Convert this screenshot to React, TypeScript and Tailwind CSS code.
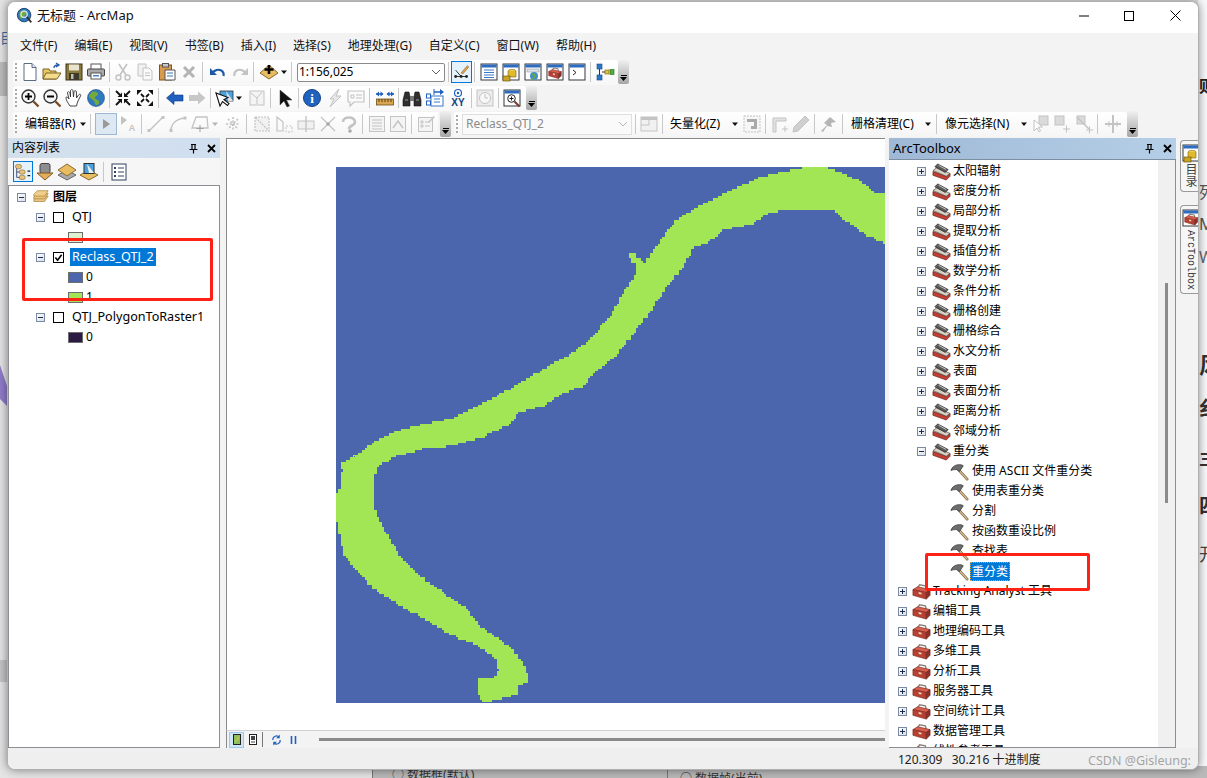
import type { ReactNode } from "react";

const riverPoints = [
  [353,457],[373,442],[384,436],[401,429],[430,423],[455,417],[484,402],[512,387],[541,370],[562,358],[587,342],[609,317],
  [626,288],[635,273],[637,265],[629,257],[629,253],[633,254],[644,263],[659,242],[675,220],[694,208],[726,192],[759,177],
  [794,169],[805,167],[823,167],[844,174],[866,185],[873,193],[885,193],[885,243],[869,236],[844,219],[834,211],[805,209],
  [771,212],[755,223],[723,231],[709,243],[694,247],[684,267],[668,286],[651,312],[637,330],[616,357],[594,373],[585,386],
  [562,394],[544,406],[519,413],[512,423],[484,437],[453,446],[423,449],[394,457],[388,461],[377,467],[374,483],[374,508],
  [380,523],[400,557],[420,577],[443,593],[467,610],[480,627],[507,645],[521,660],[527,675],[527,683],[519,686],[518,695],
  [493,701],[482,703],[477,687],[477,678],[493,677],[499,670],[495,657],[477,645],[453,635],[423,618],[397,603],[373,587],
  [355,568],[344,553],[340,537],[336,513],[336,495],[340,487],[342,470],[340,463],[355,455],
];

// raster look: walk the outline on a coarse grid so the edge comes out in steps
function stepped(points: number[][], cell: number) {
  const snap = (v: number) => Math.round(v / cell) * cell;
  let d = "";
  let lastX = 0;
  let lastY = 0;
  points.forEach((p, i) => {
    const next = points[(i + 1) % points.length];
    const n = Math.max(1, Math.ceil(Math.hypot(next[0] - p[0], next[1] - p[1]) / cell));
    for (let k = 0; k < n; k++) {
      const x = snap(p[0] - 336 + ((next[0] - p[0]) * k) / n);
      const y = snap(p[1] - 167 + ((next[1] - p[1]) * k) / n);
      if (!d) d = `M${x} ${y}`;
      else if (x !== lastX || y !== lastY) d += `H${x}V${y}`;
      lastX = x;
      lastY = y;
    }
  });
  return d + "Z";
}

const riverPath = stepped(riverPoints, 2.4);

function I({ children, size = 20 }: { children: ReactNode; size?: number }) {
  return (
    <svg viewBox="0 0 20 20" width={size} height={size} className="shrink-0">
      {children}
    </svg>
  );
}

function Tool({ children, className = "" }: { children: ReactNode; className?: string }) {
  return <div className={`flex h-[22px] w-[22px] shrink-0 items-center justify-center ${className}`}>{children}</div>;
}

function Sep({ className = "" }: { className?: string }) {
  return (
    <div className={`flex h-[20px] w-[5px] shrink-0 justify-center ${className}`}>
      <div className="h-full w-px bg-[#c8c8c8]" />
    </div>
  );
}

function Grip() {
  return (
    <div className="flex h-full w-[6px] shrink-0 flex-col items-center justify-center gap-[2px]">
      {[0, 1, 2, 3, 4].map((i) => (
        <div key={i} className="h-[2px] w-[2px] bg-[#a9a9a9]" />
      ))}
    </div>
  );
}

function Dd({ className = "", dim = false }: { className?: string; dim?: boolean }) {
  return (
    <svg viewBox="0 0 8 8" width={8} height={8} className={`shrink-0 ${className}`}>
      <path d="M1 2.5h6L4 6z" fill={dim ? "#b5b5b5" : "#111"} />
    </svg>
  );
}

function Overflow({ className = "" }: { className?: string }) {
  return (
    <div className={`flex w-[11px] shrink-0 flex-col items-center justify-end gap-px rounded-[2px] bg-gradient-to-b from-[#f0f0f0] to-[#a6a6a6] pb-[3px] ${className}`}>
      <div className="h-px w-[6px] bg-black" />
      <svg viewBox="0 0 7 4" width={7} height={4}>
        <path d="M0 0h7L3.5 4z" fill="#000" />
      </svg>
    </div>
  );
}

const win = (title: string, body: ReactNode) => (
  <I>
    <rect x="2" y="2" width="16" height="16" fill="#fff" stroke="#33363d" />
    <rect x="2.5" y="2.5" width="15" height="3" fill={title} />
    {body}
  </I>
);

const redBox = (
  <>
    <path d="M6 6l2-3 6 1 1 3" fill="none" stroke="#8c8078" strokeWidth="1.5" />
    <path d="M1 8l5-3 13 3-4 3z" fill="#d9604f" stroke="#7d2a22" strokeWidth=".7" />
    <path d="M1 8l14 3v7L1 14z" fill="#b93f33" stroke="#7d2a22" strokeWidth=".7" />
    <path d="M15 11l4-3v6l-4 4z" fill="#8f2f26" stroke="#6d2019" strokeWidth=".7" />
    <path d="M7 10.500l3 .7v2l-3-.7z" fill="#e7d7b0" />
  </>
);

const ToolboxIcon = () => <I size={19}>{redBox}</I>;

const ToolsetIcon = () => (
  <I size={19}>
    <path d="M1 10l14 5 4-3v3l-4 4-14-5z" fill="#bf3f33" stroke="#6d2019" strokeWidth=".7" />
    <path d="M1 9l4-3 14 6-4 3z" fill="#d6cfc2" stroke="#444" strokeWidth=".7" />
    <path d="M3 5l3-3 11 6-3 3z" fill="#5a5a5a" stroke="#1f1f1f" strokeWidth=".7" />
    <path d="M7 3.500l8 4.500" stroke="#c8c8c8" strokeWidth="1" />
  </I>
);

const HammerIcon = () => (
  <I size={19}>
    <path d="M8 7l10 11" stroke="#8a6f4a" strokeWidth="3" strokeLinecap="round" />
    <path d="M8 7l10 11" stroke="#d8c4a0" strokeWidth="1.2" strokeLinecap="round" />
    <path d="M1 9c1-4 5-7 11-6l2 1-4 6-3-2c-2 0-4 0-6 1z" fill="#6d6d6d" stroke="#2b2b2b" strokeWidth=".7" />
  </I>
);

function Box({ open }: { open?: boolean }) {
  return (
    <div className="relative h-[9px] w-[9px] shrink-0 border border-[#7b8aa3] bg-gradient-to-br from-white to-[#d9dde4]">
      <div className="absolute left-[1px] top-[3px] h-px w-[5px] bg-[#1d2c4f]" />
      {!open && <div className="absolute left-[3px] top-[1px] h-[5px] w-px bg-[#1d2c4f]" />}
    </div>
  );
}

function Check({ on }: { on?: boolean }) {
  return (
    <div className="flex h-[11px] w-[11px] shrink-0 items-center justify-center border border-black bg-white">
      {on && (
        <svg viewBox="0 0 10 10" width={9} height={9}>
          <path d="M1.5 5l2.5 3 4.5-6" fill="none" stroke="#000" strokeWidth="1.8" />
        </svg>
      )}
    </div>
  );
}

function Swatch({ color }: { color: string }) {
  return <div className="h-[11px] w-[15px] shrink-0 border border-[#6e6e6e]" style={{ backgroundColor: color }} />;
}

function LayerRow({ name, on, selected }: { name: string; on?: boolean; selected?: boolean }) {
  return (
    <div className="flex h-5 items-center pl-[27px]">
      <Box open />
      <div className="ml-[8px]">
        <Check on={on} />
      </div>
      <span className={`ml-[6px] px-[2px] text-[12.6px] leading-[18px] ${selected ? "bg-[#0078d7] text-white" : ""}`}>{name}</span>
    </div>
  );
}

function LegendRow({ color, label }: { color: string; label?: string }) {
  return (
    <div className="flex h-5 items-center pl-[59px]">
      <Swatch color={color} />
      <span className="ml-[3px]">{label}</span>
    </div>
  );
}

const toolsets = ["太阳辐射", "密度分析", "局部分析", "提取分析", "插值分析", "数学分析", "条件分析", "栅格创建", "栅格综合", "水文分析", "表面", "表面分析", "距离分析", "邻域分析"];
const tools = ["使用 ASCII 文件重分类", "使用表重分类", "分割", "按函数重设比例", "查找表"];
const boxes = ["Tracking Analyst 工具", "编辑工具", "地理编码工具", "多维工具", "分析工具", "服务器工具", "空间统计工具", "数据管理工具", "线性参考工具"];
const menus = ["文件(F)", "编辑(E)", "视图(V)", "书签(B)", "插入(I)", "选择(S)", "地理处理(G)", "自定义(C)", "窗口(W)", "帮助(H)"];

function ToolsetRow({ name, open }: { name: string; open?: boolean }) {
  return (
    <div className="flex h-5 items-center pl-[28px]">
      <Box open={open} />
      <div className="ml-[6px] w-[19px]">
        <ToolsetIcon />
      </div>
      <span className="ml-[2px] whitespace-pre">{name}</span>
    </div>
  );
}

function ToolRow({ name, selected }: { name: string; selected?: boolean }) {
  return (
    <div className="flex h-5 items-center pl-[61px]">
      <HammerIcon />
      {selected ? (
        <span className="ml-[1px] border border-dotted border-[#e0a040] bg-[#0078d7] px-px leading-[17px] text-white">{name}</span>
      ) : (
        <span className="ml-[3px] whitespace-pre">{name}</span>
      )}
    </div>
  );
}

function BoxRow({ name }: { name: string }) {
  return (
    <div className="flex h-5 items-center pl-[9px]">
      <Box />
      <div className="ml-[5px] w-[19px]">
        <ToolboxIcon />
      </div>
      <span className="ml-[2px] whitespace-pre">{name}</span>
    </div>
  );
}

const dim = "#c3c3c3";

function RowOne() {
  return (
    <div className="ml-[5px] flex h-[25px] w-[605px] items-center rounded-[3px] bg-gradient-to-b from-white to-[#f7f7f7]">
      <Grip />
      <Tool><I><path d="M4 1.5h8l4 4v13H4z" fill="#fff" stroke="#5b6b80" /><path d="M12 1.5v4h4" fill="#dfe7f1" stroke="#5b6b80" /></I></Tool>
      <Tool><I><path d="M1 17V7h6l1 2h6v8z" fill="#e8c765" stroke="#7a6226" /><path d="M1 17l3-6h15l-4 6z" fill="#f4dc8d" stroke="#7a6226" /><path d="M12 6c0-2 2-3 4-3M14 1l3 2-3 2" fill="none" stroke="#2a5fb0" strokeWidth="1.4" /></I></Tool>
      <Tool><I><rect x="2" y="2" width="16" height="16" fill="#8a7a3c" stroke="#3b3418" /><rect x="5" y="2.5" width="10" height="6" fill="#e9e4cf" /><rect x="5" y="11" width="10" height="7" fill="#3d3a2a" /><rect x="7" y="12" width="2.5" height="5" fill="#bbb" /></I></Tool>
      <Tool><I><rect x="5" y="2" width="10" height="6" fill="#fff" stroke="#555" /><rect x="1.5" y="7" width="17" height="7" rx="1" fill="#a9a9a9" stroke="#444" /><rect x="5" y="11" width="10" height="6" fill="#fff" stroke="#555" /><rect x="7" y="13" width="6" height="1.5" fill="#4a86c8" /></I></Tool>
      <Sep />
      <Tool><I><path d="M6 2l7 11M14 2L7 13" stroke={dim} strokeWidth="1.6" /><circle cx="5.5" cy="15.5" r="2.5" fill="none" stroke={dim} strokeWidth="1.4" /><circle cx="14.5" cy="15.5" r="2.5" fill="none" stroke={dim} strokeWidth="1.4" /></I></Tool>
      <Tool><I><path d="M3 2h8v12H3z" fill="#f1f1f1" stroke={dim} /><path d="M8 6h6l3 3v9H8z" fill="#fafafa" stroke={dim} /><path d="M10 11h5M10 13.5h5" stroke={dim} /></I></Tool>
      <Tool><I><rect x="2.5" y="3" width="12" height="15" fill="#d99a4e" stroke="#7d5520" /><rect x="5.5" y="1.5" width="6" height="3.5" fill="#c9c9c9" stroke="#555" /><path d="M8 8h10v10H8z" fill="#fff" stroke="#555" /><path d="M10 11h6M10 14h6" stroke="#3b74b5" strokeWidth="1.2" /></I></Tool>
      <Tool><I><path d="M5 5l10 10M15 5L5 15" stroke="#b4b4b4" strokeWidth="3" /></I></Tool>
      <Sep />
      <Tool className="ml-[2px]"><I><path d="M15.5 14c1-5-4-8-9-5L4 11" fill="none" stroke="#1f5aa8" strokeWidth="2.2" /><path d="M2 6v7h7z" fill="#1f5aa8" /></I></Tool>
      <Tool><I><path d="M4.5 14c-1-5 4-8 9-5l2.5 2" fill="none" stroke={dim} strokeWidth="2.2" /><path d="M18 6v7h-7z" fill={dim} /></I></Tool>
      <Sep />
      <Tool className="ml-[2px]"><I><path d="M10 3l9 8-9 6-9-6z" fill="#e8bd62" stroke="#8a6a2a" /><path d="M10 3v9M5.5 7.5h9" stroke="#000" strokeWidth="2.6" /></I></Tool>
      <Dd />
      <Sep className="ml-px" />
      <div className="ml-[3px] flex h-[19px] w-[148px] shrink-0 items-center justify-between rounded-[2px] border border-[#8a8a8a] bg-white pl-px pr-[3px]">
        <span>1:156,025</span>
        <svg viewBox="0 0 10 6" width={10} height={6}><path d="M1 1l4 4 4-4" fill="none" stroke="#666" /></svg>
      </div>
      <Sep className="ml-px" />
      <div className="flex h-[22px] w-[21px] shrink-0 items-center justify-center border border-[#0078d7] bg-[#e5f1fb]">
        <I size={18}><path d="M2 15h13" stroke="#222" /><circle cx="3" cy="15" r="1.6" fill="#222" /><circle cx="9" cy="15" r="1.6" fill="#222" /><circle cx="15" cy="15" r="1.6" fill="#222" /><path d="M3 8l6 7" stroke="#222" /><path d="M9 11L16 3l1.5 1.5L11 12z" fill="#e8a33c" stroke="#7a4f14" strokeWidth=".6" /></I>
      </div>
      <Sep />
      <Tool className="ml-px">{win("#2d6cc0", <path d="M5 8h10M5 10.5h10M5 13h10M5 15.5h10" stroke="#3a78c8" />)}</Tool>
      <Tool>{win("#2d6cc0", <><ellipse cx="11" cy="9" rx="4" ry="1.6" fill="#f2d24c" stroke="#7a6210" strokeWidth=".6" /><path d="M7 9v6h8V9" fill="#e2b92c" stroke="#7a6210" strokeWidth=".6" /><rect x="2" y="14" width="7" height="5" fill="#c9a321" stroke="#5e4c0c" strokeWidth=".6" /></>)}</Tool>
      <Tool>{win("#2d6cc0", <><rect x="4" y="7" width="12" height="3" fill="#dde3ea" stroke="#888" strokeWidth=".5" /><circle cx="11" cy="14" r="4" fill="#3f8fd0" /><path d="M9 12.5c2-.8 3 .4 3 1.5s-2 2-2.5 3.5" stroke="#6aa93b" strokeWidth="1.6" fill="none" /></>)}</Tool>
      <Tool>{win("#2d6cc0", <g transform="translate(3 4) scale(.7)">{redBox}</g>)}</Tool>
      <Tool>{win("#2d6cc0", <path d="M6 8l3 2.5-3 2.5" fill="none" stroke="#222" />)}</Tool>
      <Sep />
      <Tool className="ml-px"><I><rect x="2" y="2" width="5" height="5" fill="#2e78c8" stroke="#174a85" strokeWidth=".6" /><rect x="2" y="13" width="5" height="5" fill="#2e78c8" stroke="#174a85" strokeWidth=".6" /><rect x="10" y="8" width="4" height="4" fill="#e3c23a" stroke="#7a6210" strokeWidth=".6" /><rect x="15" y="7.5" width="4" height="5" fill="#4fae3f" stroke="#236b19" strokeWidth=".6" /><path d="M4.5 7v6M7 10h3" stroke="#333" /></I></Tool>
    </div>
  );
}

function RowTwo() {
  return (
    <div className="ml-[5px] flex h-[25px] w-[513px] items-center rounded-[3px] bg-gradient-to-b from-white to-[#f7f7f7]">
      <Grip />
      <Tool><I><circle cx="8.5" cy="8.5" r="6.5" fill="#f4f4f4" stroke="#333" strokeWidth="1.4" /><path d="M5 8.5h7M8.5 5v7" stroke="#000" strokeWidth="1.8" /><path d="M13.5 13.5l5 5" stroke="#7a4a2a" strokeWidth="2.4" /></I></Tool>
      <Tool><I><circle cx="8.5" cy="8.5" r="6.5" fill="#f4f4f4" stroke="#333" strokeWidth="1.4" /><path d="M5 8.5h7" stroke="#000" strokeWidth="1.8" /><path d="M13.5 13.5l5 5" stroke="#7a4a2a" strokeWidth="2.4" /></I></Tool>
      <Tool><I><path d="M6 18c-2-3-4-6-4-8s2-1 3 1L3.5 5c0-2 2-1.5 2.5 0L6.5 9 6.500 3c0-2 2.500-2 2.500 0l.5 6 .5-5c.3-2 2.500-1.500 2.400 0L12.500 10l2-3c1-1.500 3-.5 2 1l-3 6-1 4z" fill="#fff" stroke="#333" strokeWidth=".9" /></I></Tool>
      <Tool><I><circle cx="10" cy="10" r="8.5" fill="#2f79bf" stroke="#1b4a7c" strokeWidth=".6" /><path d="M6 4c3-1 6 0 6 2s-3 2-3 4 4 1 4 4-2 3-3 3c-2-2-1-4-3-5S3 9 3 8s2-3 3-4z" fill="#74a93d" /></I></Tool>
      <Sep />
      <Tool><I><path d="M3 3l4 4M17 3l-4 4M3 17l4-4M17 17l-4-4" stroke="#111" strokeWidth="1.8" /><path d="M9 9V4.500L4.500 9zM11 9V4.500L15.500 9zM9 11v4.500L4.500 11zM11 11v4.500l4.500-4.500z" fill="#111" /></I></Tool>
      <Tool><I><path d="M6 6L9 9M14 6l-3 3M6 14l3-3M14 14l-3-3" stroke="#111" strokeWidth="1.8" /><path d="M2 2h5L2 7zM18 2h-5l5 5zM2 18h5l-5-5zM18 18h-5l5-5z" fill="#111" /></I></Tool>
      <Sep />
      <Tool className="ml-[3px]"><I><path d="M1.5 10L9 3.500V7h9v6H9v3.500z" fill="#1f5fbf" stroke="#0d3a80" strokeWidth=".6" /></I></Tool>
      <Tool><I><path d="M18.5 10L11 3.500V7H2v6h9v3.500z" fill="#c7c7c7" /></I></Tool>
      <Sep />
      <Tool><I><rect x="6" y="3" width="13" height="10" fill="#4aa3df" stroke="#333" strokeWidth=".8" /><path d="M12 3l7 10h-5z" fill="#e2e2e2" /><path d="M2 5l4 13 2.500-4.500 5 4 1.500-2-5-4 4-2z" fill="#fff" stroke="#111" strokeWidth="1.1" /></I></Tool>
      <Dd />
      <Tool className="ml-[3px]"><I><rect x="3" y="3" width="14" height="14" fill="#f4f4f4" stroke={dim} /><path d="M4 5l6 5 5-6M10 10v6" fill="none" stroke={dim} /></I></Tool>
      <Sep />
      <Tool className="ml-px"><I><path d="M5 2v15l4-4 3 6 2.500-1-3-6h5.500z" fill="#111" stroke="#444" strokeWidth=".5" /></I></Tool>
      <Sep />
      <Tool><I><circle cx="10" cy="10" r="8.5" fill="#1f63bf" stroke="#123f80" /><text x="10" y="15" textAnchor="middle" fontSize="13" fontWeight="700" fontFamily="Liberation Serif, serif" fill="#fff">i</text></I></Tool>
      <Tool className="ml-px"><I><path d="M14 1L5 11h4l-4 8 11-11h-5z" fill="#e7e7e7" stroke={dim} /></I></Tool>
      <Tool className="-ml-px"><I><path d="M2 3h16v11H8l-4 4v-4H2z" fill="#fafafa" stroke={dim} strokeWidth="1.2" /><path d="M5 7h3v3H5zM10 7h6M10 10h6" fill="none" stroke={dim} /></I></Tool>
      <Sep />
      <Tool className="ml-[2px]"><I><rect x="1.5" y="11" width="17" height="6" fill="#d9a54f" stroke="#6d4f1c" strokeWidth=".8" /><path d="M4 11v3M7 11v3M10 11v3M13 11v3M16 11v3" stroke="#5a3f12" /><path d="M1 6h7M12 6h7" stroke="#1f5fbf" strokeWidth="1.4" /><path d="M1 6l3-2.500v5zM19 6l-3-2.500v5zM8.500 6l-3-2.500v5zM11.500 6l3-2.500v5z" fill="#1f5fbf" /></I></Tool>
      <Sep />
      <Tool><I><path d="M3 4h4l1 5v9H1v-6zM17 4h-4l-1 5v9h7v-6z" fill="#2f2f2f" stroke="#111" strokeWidth=".6" /><rect x="8" y="8" width="4" height="5" fill="#777" /><path d="M3 12h3M14 12h3" stroke="#999" /></I></Tool>
      <Tool className="ml-px"><I><rect x="6" y="8" width="12" height="10" fill="#fff" stroke="#3a78c8" /><path d="M9 11h6M9 14h6" stroke="#3a78c8" /><rect x="1.5" y="6" width="4" height="4" fill="#fff" stroke="#1f5fbf" /><rect x="1.5" y="13" width="4" height="4" fill="#fff" stroke="#1f5fbf" /><path d="M9 4h6" stroke="#1f5fbf" strokeWidth="1.4" /><path d="M19 4l-4-3v6z" fill="#1f5fbf" /><path d="M9 1v6" stroke="#1f5fbf" /></I></Tool>
      <Tool className="ml-px"><I><circle cx="10" cy="5" r="3.5" fill="none" stroke="#1f5fbf" strokeWidth="1.2" /><circle cx="10" cy="5" r="1.2" fill="#1f5fbf" /><text x="10" y="18" textAnchor="middle" fontSize="10" fontWeight="700" fontFamily="Liberation Sans, sans-serif" fill="#14427f">XY</text></I></Tool>
      <Sep />
      <Tool><I><rect x="2" y="2" width="16" height="16" fill="#ececec" stroke={dim} /><circle cx="10" cy="10" r="5.5" fill="#f8f8f8" stroke={dim} /><path d="M10 6v4h3" fill="none" stroke={dim} /></I></Tool>
      <Sep />
      <Tool>{win("#2d6cc0", <><circle cx="9.5" cy="10.500" r="3.800" fill="#fff" stroke="#222" /><path d="M7.500 10.500h4M9.500 8.500v4" stroke="#222" /><path d="M12.500 13.500l5 5" stroke="#7a3b2a" strokeWidth="2" /></>)}</Tool>
    </div>
  );
}

function RowThree() {
  return (
    <div className="ml-[5px] flex h-[25px] items-center">
      <div className="flex h-full w-[425px] items-center rounded-l-[3px] bg-gradient-to-b from-white to-[#f5f5f5]">
        <Grip />
        <span className="ml-[6px] w-[52px] shrink-0 whitespace-nowrap">编辑器(R)</span>
        <Dd className="ml-[2px]" />
        <Sep className="ml-px" />
        <div className="ml-[2px] flex h-[22px] w-[22px] shrink-0 items-center justify-center border border-[#9db8d2] bg-[#dde8f3]">
          <svg viewBox="0 0 12 12" width={12} height={12}><path d="M3 1v10l7-5z" fill="#9a9a9a" /></svg>
        </div>
        <Tool><I><path d="M3 2v9l6-5z" fill={dim} /><text x="14" y="17" textAnchor="middle" fontSize="9" fontWeight="700" fontFamily="Liberation Sans, sans-serif" fill={dim}>A</text></I></Tool>
        <Sep />
        <Tool className="ml-px"><I><path d="M3 17L17 3" stroke={dim} strokeWidth="1.5" /><rect x="1.5" y="15" width="3" height="3" fill={dim} /><rect x="15.5" y="2" width="3" height="3" fill={dim} /></I></Tool>
        <Tool><I><path d="M3 17c0-7 5-12 14-13" fill="none" stroke={dim} strokeWidth="1.5" /><rect x="1.5" y="15" width="3" height="3" fill={dim} /><rect x="15.5" y="2.5" width="3" height="3" fill={dim} /></I></Tool>
        <Tool><I><path d="M2 14L6 3h11l1 11z" fill="none" stroke={dim} strokeWidth="1.3" /><path d="M10 11v7M6.500 14.500h7" stroke="#9f9f9f" /></I></Tool>
        <Dd dim />
        <Tool className="ml-[3px]"><I><path d="M3 10h14M10 3v14M5 5l10 10M15 5L5 15" stroke={dim} strokeWidth="1.6" strokeDasharray="2 1.5" /></I></Tool>
        <Sep />
        <Tool className="ml-[2px]"><I><path d="M3 3h14v14zM3 3v14h14" fill="#f1f1f1" stroke={dim} strokeWidth="1.2" strokeDasharray="2 1" /></I></Tool>
        <Tool><I><path d="M3 3l6 5v9H3z" fill="none" stroke={dim} strokeWidth="1.2" /><path d="M12 12h6v6h-6z" fill="none" stroke={dim} strokeDasharray="2 1.5" /></I></Tool>
        <Tool><I><rect x="2" y="7" width="16" height="8" fill="#f1f1f1" stroke={dim} /><path d="M10 2v16" stroke={dim} strokeWidth="1.4" /></I></Tool>
        <Tool><I><path d="M3 17L17 3M3 3l14 14" stroke={dim} strokeWidth="1.3" /><circle cx="10" cy="10" r="1.8" fill="#a9a9a9" /></I></Tool>
        <Tool className="-ml-px"><I><path d="M4 8c0-6 12-6 12 0 0 4-6 3-6 7" fill="none" stroke={dim} strokeWidth="2.6" /><circle cx="11" cy="17" r="1.8" fill="#a9a9a9" /></I></Tool>
        <Sep />
        <Tool className="ml-px"><I><rect x="2.5" y="2.5" width="15" height="15" fill="#f4f4f4" stroke={dim} /><path d="M5 6h10M5 9h10M5 12h10M5 15h10" stroke={dim} /></I></Tool>
        <Tool className="-ml-px"><I><rect x="2.5" y="2.5" width="15" height="15" fill="#f4f4f4" stroke={dim} /><path d="M5 14l5-7 5 7" fill="none" stroke={dim} strokeWidth="1.4" /></I></Tool>
        <Sep />
        <Tool className="ml-px"><I><rect x="2.5" y="3.5" width="14" height="14" fill="#f4f4f4" stroke={dim} /><path d="M5 7h2v2H5zM5 11h2v2H5zM9 8h5M9 12h5" fill="none" stroke={dim} /><path d="M12 8l6-6 1 1-6 6z" fill={dim} /></I></Tool>
      </div>
      <Overflow className="ml-[2px] h-[26px]" />
      <div className="ml-[3px] flex h-full w-[673px] items-center rounded-[3px] bg-gradient-to-b from-white to-[#f5f5f5]">
        <Grip />
        <div className="ml-[2px] flex h-[21px] w-[170px] shrink-0 items-center justify-between border border-[#dedede] bg-[#fafafa] pl-[3px] pr-[3px] text-[#8b8b8b]">
          <span>Reclass_QTJ_2</span>
          <svg viewBox="0 0 10 6" width={10} height={6}><path d="M1 1l4 4 4-4" fill="none" stroke="#b5b5b5" /></svg>
        </div>
        <Sep className="ml-px" />
        <Tool><I><rect x="2" y="3" width="16" height="14" fill="#f1f1f1" stroke={dim} /><rect x="2" y="3" width="16" height="3" fill={dim} /><path d="M10 6v5H2" fill="none" stroke={dim} /></I></Tool>
        <Sep />
        <span className="ml-[5px] w-[52px] shrink-0 whitespace-nowrap">矢量化(Z)</span>
        <Dd className="ml-[9px]" />
        <Tool className="ml-[2px]"><I><rect x="2" y="2" width="16" height="16" fill="#f6f6f6" stroke={dim} strokeDasharray="2 1" /><path d="M5 5h10v10H9v-3h3V8H5z" fill="#a9a9a9" /></I></Tool>
        <Sep />
        <Tool><I><path d="M4 18V4h13v3H7v11z" fill="#e2e2e2" stroke={dim} /><path d="M13 15h6M16 12v6" stroke={dim} /></I></Tool>
        <Tool><I><path d="M2 18l1-5L14 2l4 4L7 17z" fill="#cfcfcf" stroke={dim} /></I></Tool>
        <Sep />
        <Tool className="ml-px"><I><path d="M2 17l6-6-3-2 6-6 6 5-5 1 1 4-5-1-4 6z" fill="#b5b5b5" /></I></Tool>
        <Sep />
        <span className="ml-[6px] w-[64px] shrink-0 whitespace-nowrap">栅格清理(C)</span>
        <Dd className="ml-[9px]" />
        <Sep className="ml-[2px]" />
        <span className="ml-[6px] w-[66px] shrink-0 whitespace-nowrap">像元选择(N)</span>
        <Dd className="ml-[9px]" />
        <Tool className="ml-[2px]"><I><rect x="8" y="2" width="9" height="9" fill="#dadada" stroke={dim} /><path d="M3 6v11l3-3 2 4 1.5-1-2-4h4z" fill="#fff" stroke={dim} /></I></Tool>
        <Tool className="-ml-px"><I><rect x="3" y="2" width="9" height="9" fill="#dadada" stroke={dim} /><path d="M11 15h7M14.500 11.500v7" stroke={dim} /></I></Tool>
        <Tool><I><rect x="3" y="2" width="8" height="8" fill="#dadada" stroke={dim} /><path d="M3 3l12 12" stroke={dim} strokeWidth="1.5" /><path d="M12 16h7M15.500 12.500v7" stroke={dim} /></I></Tool>
        <Sep />
        <Tool className="ml-[2px]"><I><path d="M10 1v18" stroke="#b5b5b5" strokeWidth="1.6" /><path d="M2 10h16" stroke={dim} strokeWidth="2" /><path d="M6 7v6M14 7v6" stroke={dim} /></I></Tool>
      </div>
      <Overflow className="h-[26px]" />
    </div>
  );
}

function PanelButtons() {
  return (
    <div className="flex items-center gap-[7px]">
      <svg viewBox="0 0 11 11" width={11} height={11}><path d="M3 1.5h5M4 1.5v5h3v-5M1.5 6.500h8M5.500 6.500v4" fill="none" stroke="#000" strokeWidth="1.2" /></svg>
      <svg viewBox="0 0 11 11" width={11} height={11}><path d="M2 2l7 7M9 2L2 9" stroke="#000" strokeWidth="1.8" /></svg>
    </div>
  );
}

function Toc() {
  return (
    <div className="flex h-full w-[212px] shrink-0 flex-col">
      <div className="flex h-[20px] items-center justify-between bg-gradient-to-r from-[#d3e0ec] to-[#d0dff0] pl-[4px] pr-[3px] text-[12px]">
        <span>内容列表</span>
        <PanelButtons />
      </div>
      <div className="flex h-[27px] items-center bg-[#f6f6f6] pl-[5px]">
        <div className="flex h-[21px] w-[20px] items-center justify-center border border-[#0078d7] bg-[#e5f1fb]">
          <I size={18}><ellipse cx="5" cy="4" rx="3.5" ry="2.5" fill="#e8c27a" stroke="#7a6230" strokeWidth=".6" /><ellipse cx="9" cy="10" rx="3.5" ry="2.5" fill="#e8c27a" stroke="#7a6230" strokeWidth=".6" /><ellipse cx="9" cy="16" rx="3.5" ry="2.5" fill="#e8c27a" stroke="#7a6230" strokeWidth=".6" /><path d="M3 6v10h3M3 10h3" fill="none" stroke="#446" /><path d="M15 9h3M15 14h3" stroke="#123" strokeWidth="1.5" /></I>
        </div>
        <Tool className="ml-px"><I><rect x="5" y="1.5" width="10" height="10" rx="2" fill="#8e8e8e" stroke="#444" /><path d="M2 11h16l-8 7z" fill="#e2ad5d" stroke="#7d5a20" /></I></Tool>
        <Tool><I><path d="M10 8l9 5-9 5-9-5z" fill="#aaa" stroke="#666" /><path d="M10 2l9 6-9 6-9-6z" fill="#e8bd62" stroke="#8a6a2a" /></I></Tool>
        <Tool><I><path d="M10 8l9 5-9 5-9-5z" fill="#e8bd62" stroke="#8a6a2a" /><rect x="5" y="1.5" width="10" height="10" fill="#4aa3df" stroke="#333" /><path d="M8 2l7 9h-5z" fill="#eee" /></I></Tool>
        <Sep className="ml-px" />
        <Tool className="ml-[2px]"><I><rect x="3" y="2" width="14" height="16" fill="#fff" stroke="#33415c" /><path d="M5 5h2v2H5zM5 9h2v2H5zM5 13h2v2H5z" fill="#33415c" /><path d="M9 6h6M9 10h6M9 14h6" stroke="#33415c" /></I></Tool>
      </div>
      <div className="flex-1 border border-[#8d8d94] bg-white pt-[1px] text-[12px] text-black">
        <div className="flex h-5 items-center pl-[8px]">
          <Box open />
          <div className="ml-[6px]">
            <I size={18}><path d="M2 13l4-4h12l-4 6H2z" fill="#e7c68a" stroke="#a0762a" strokeWidth=".7" /><path d="M2 10l4-4h12l-4 6H2z" fill="#ecc67c" stroke="#a0762a" strokeWidth=".7" /><path d="M2 7l4-4h12l-4 6H2z" fill="#f0cf8c" stroke="#a0762a" strokeWidth=".7" /></I>
          </div>
          <span className="ml-[3px] font-bold">图层</span>
        </div>
        <LayerRow name="QTJ" />
        <LegendRow color="#dcf2cc" />
        <LayerRow name="Reclass_QTJ_2" on selected />
        <LegendRow color="#4c66ae" label="0" />
        <LegendRow color="#a2e655" label="1" />
        <LayerRow name="QTJ_PolygonToRaster1" />
        <LegendRow color="#2b1a44" label="0" />
      </div>
    </div>
  );
}

function MapView() {
  return (
    <div className="flex h-full w-[659px] shrink-0 flex-col border-t border-t-[#8a8a8a]">
      <div className="h-[592px] border-b border-l border-[#d0d0d0] border-l-[#8a8a8a] bg-white pl-[109px] pt-[28px]">
        <div className="h-[536px] w-[549px] bg-[#4c66ae]">
          <svg viewBox="0 0 549 536" width={549} height={536} shapeRendering="crispEdges">
            <path d={riverPath} fill="#a2e655" />
          </svg>
        </div>
      </div>
      <div className="flex h-[17px] items-center border-l border-[#8a8a8a] pl-[2px]">
        <div className="flex h-[16px] w-[15px] items-center justify-center border border-[#9cc8ee] bg-[#cfe5f8]">
          <svg viewBox="0 0 8 11" width={8} height={11}><rect x=".5" y=".5" width="7" height="10" fill="#8fbf5a" stroke="#222" /><path d="M2 8l4-5" stroke="#e8c63c" /></svg>
        </div>
        <div className="ml-[5px] flex w-[8px] justify-center">
          <svg viewBox="0 0 8 11" width={8} height={11}><rect x=".5" y=".5" width="7" height="10" fill="#fff" stroke="#222" /><rect x="2" y="2" width="4" height="4" fill="#444" /><path d="M2 8h4" stroke="#444" /></svg>
        </div>
        <div className="ml-[5px] h-[15px] w-px bg-[#777]" />
        <svg viewBox="0 0 12 12" width={11} height={12} className="ml-[8px]"><path d="M2 6a4 4 0 0 1 7-3M10 6a4 4 0 0 1-7 3" fill="none" stroke="#1f63bf" strokeWidth="1.3" /><path d="M9.5 0v4h-4zM2.5 12V8h4z" fill="#1f63bf" /></svg>
        <svg viewBox="0 0 8 10" width={8} height={10} className="ml-[8px]"><path d="M1.5 1v8M5.5 1v8" stroke="#1f5fbf" strokeWidth="1.6" /></svg>
        <div className="ml-[21px] h-[3px] flex-1 bg-[#8a8a8a]" />
      </div>
    </div>
  );
}

function Toolbox() {
  return (
    <div className="flex h-full w-[287px] shrink-0 flex-col">
      <div className="flex h-[22px] shrink-0 items-center justify-between border-b border-b-[#7e8ea1] bg-gradient-to-r from-[#9fb8d5] to-[#b6cfe8] pl-[4px] pr-[3px] text-[13px]">
        <span>ArcToolbox</span>
        <PanelButtons />
      </div>
      <div className="flex min-h-0 flex-1 overflow-hidden border-b border-r border-[#8d8d94] bg-white text-[12px] text-black">
        <div className="min-w-0 flex-1 overflow-hidden pt-px">
          {toolsets.map((name) => (
            <ToolsetRow key={name} name={name} />
          ))}
          <ToolsetRow name="重分类" open />
          {tools.map((name) => (
            <ToolRow key={name} name={name} />
          ))}
          <ToolRow name="重分类" selected />
          {boxes.map((name) => (
            <BoxRow key={name} name={name} />
          ))}
        </div>
        <div className="w-[17px] shrink-0 bg-[#f0f0f0] pl-[7px] pt-[123px]">
          <div className="h-[220px] w-[3px] bg-[#8a8a8a]" />
        </div>
      </div>
    </div>
  );
}

function SideTabs() {
  return (
    <div className="flex h-full w-[24px] shrink-0 flex-col pl-[4px] pt-[2px]">
      <div className="flex h-[52px] flex-col items-center rounded-l-[4px] border border-r-0 border-[#9a9a9a] bg-[#f6f6f6] pt-[2px]">
        {win("#2d6cc0", <><ellipse cx="11" cy="9" rx="4" ry="1.6" fill="#f2d24c" stroke="#7a6210" strokeWidth=".6" /><path d="M7 9v6h8V9" fill="#e2b92c" stroke="#7a6210" strokeWidth=".6" /><rect x="3" y="14" width="7" height="5" fill="#c9a321" stroke="#5e4c0c" strokeWidth=".6" /></>)}
        <span className="text-[12px] leading-[13px] text-[#444] [writing-mode:vertical-rl]">目录</span>
      </div>
      <div className="mt-[13px] flex h-[89px] flex-col items-center rounded-l-[4px] border border-r-0 border-[#9a9a9a] bg-[#f6f6f6] pt-[2px]">
        {win("#2d6cc0", <g transform="translate(3 4) scale(.72)">{redBox}</g>)}
        <span className="mt-[2px] font-['Liberation_Mono',monospace] text-[10px] leading-[13px] text-[#333] [writing-mode:vertical-rl]">ArcToolbox</span>
      </div>
    </div>
  );
}

export default function App() {
  return (
    <div className="relative h-[778px] w-[1207px] overflow-hidden bg-[#e4e4e4] font-['Noto_Sans','Noto_Sans_CJK_SC',sans-serif] text-[12px] text-black">
      {/* what shows around the window: the blog page behind it */}
      <div className="absolute left-0 top-[62px] h-[34px] w-[8px] bg-[#bdbdbd]" />
      <div className="absolute left-0 top-[30px] text-[14px] leading-[16px] text-[#3a6ea5]">目</div>
      <div className="absolute left-0 top-[660px] h-[22px] w-[8px] bg-[#c4c4c4]" />
      <svg viewBox="0 0 8 60" width={8} height={60} className="absolute left-0 top-[365px]"><path d="M0 0l8 24v18L0 34z" fill="#8f7cc9" /></svg>
      <div className="absolute right-0 top-0 h-full w-[9px] bg-[#f8f9fb]" />
      <div className="absolute bottom-0 left-[372px] h-[12px] w-[835px] bg-[#b9b9b9]" />
      <div className="absolute bottom-0 left-[372px] h-[12px] w-px bg-[#777]" />
      <div className="absolute bottom-0 left-[667px] h-[12px] w-px bg-[#777]" />
      <div className="absolute left-[392px] top-[766px] text-[12px] text-[#333]">○ 数据框(默认)</div>
      <div className="absolute left-[680px] top-[770px] text-[12px] text-[#333]">○ 数据帧(当前)</div>
      {[["则", 74, "text-[#222] font-bold"], ["列", 180, "text-[#555]"], ["MI", 212, "text-[#555]"], ["W", 245, "text-[#667]"], ["风", 348, "text-[#333] font-bold text-[22px]"], ["纟", 394, "text-[#333] font-bold text-[20px]"], ["三", 447, "text-[#333] font-bold"], ["四", 491, "text-[#333] font-bold text-[20px]"], ["开", 541, "text-[#444] text-[18px]"]].map(([t, y, c]) => (
        <div key={String(y)} className={`absolute left-[1199px] whitespace-nowrap text-[16px] ${c}`} style={{ top: Number(y) }}>
          {t}
        </div>
      ))}

      <div className="relative ml-[7px] mt-[1px] flex h-[769px] w-[1192px] flex-col overflow-hidden rounded-[8px] border border-[#b0b0b0] bg-[#f3f3f3] shadow-[0_0_10px_rgba(0,0,0,0.45)]">
        <div className="flex h-[31px] shrink-0 items-center bg-white pb-[4px] pl-[8px]">
          <I size={18}><circle cx="9" cy="9" r="7.5" fill="#2f79bf" stroke="#16395f" /><path d="M5 5c3-2 7-1 7 2s-4 2-4 5l-3 1c-1-2-2-6 0-8z" fill="#74a93d" /><circle cx="9" cy="8" r="3.5" fill="none" stroke="#dfe8f2" strokeWidth="1.4" /><path d="M12 11l5 6" stroke="#333" strokeWidth="2" /></I>
          <span className="ml-[3px] text-[13px] text-[#111]">无标题 - ArcMap</span>
          <div className="ml-auto flex items-center">
            <svg viewBox="0 0 10 10" width={10} height={10}><path d="M0 5h10" stroke="#000" /></svg>
            <svg viewBox="0 0 10 10" width={10} height={10} className="ml-[35px]"><rect x=".5" y=".5" width="9" height="9" fill="none" stroke="#000" /></svg>
            <svg viewBox="0 0 11 11" width={11} height={11} className="ml-[36px] mr-[17px]"><path d="M.5.5l10 10M10.500.5l-10 10" stroke="#000" /></svg>
          </div>
        </div>
        <div className="flex h-[26px] shrink-0 items-center gap-[17px] pl-[12px] text-[12px] text-[#111]">
          {menus.map((m) => (
            <span key={m}>{m}</span>
          ))}
        </div>
        <div className="flex h-[26px] shrink-0 items-center">
          <RowOne />
          <Overflow className="h-[24px]" />
        </div>
        <div className="flex h-[26px] shrink-0 items-center">
          <RowTwo />
          <Overflow className="h-[24px]" />
        </div>
        <div className="flex h-[26px] shrink-0 items-center">
          <RowThree />
        </div>
        <div className="mt-[1px] flex h-[610px] shrink-0">
          <Toc />
          <div className="ml-[6px]">
            <MapView />
          </div>
          <div className="ml-[4px]">
            <Toolbox />
          </div>
          <SideTabs />
        </div>
        <div className="flex flex-1 items-center bg-[#efefef] pl-[890px] pt-[3px] text-[12px] text-[#222]">
          <span className="whitespace-pre">120.309   30.216 十进制度</span>
        </div>
      </div>

      <div className="absolute left-[22px] top-[238px] h-[63px] w-[191px] rounded-[2px] border-[3px] border-[#ff2214]" />
      <div className="absolute left-[925px] top-[553px] h-[38px] w-[165px] rounded-[2px] border-[3px] border-[#ff2214]" />
      <div className="absolute left-[1088px] top-[752px] text-[12.5px] text-[#9a9a9a]/90">CSDN @Gisleung:</div>
    </div>
  );
}
